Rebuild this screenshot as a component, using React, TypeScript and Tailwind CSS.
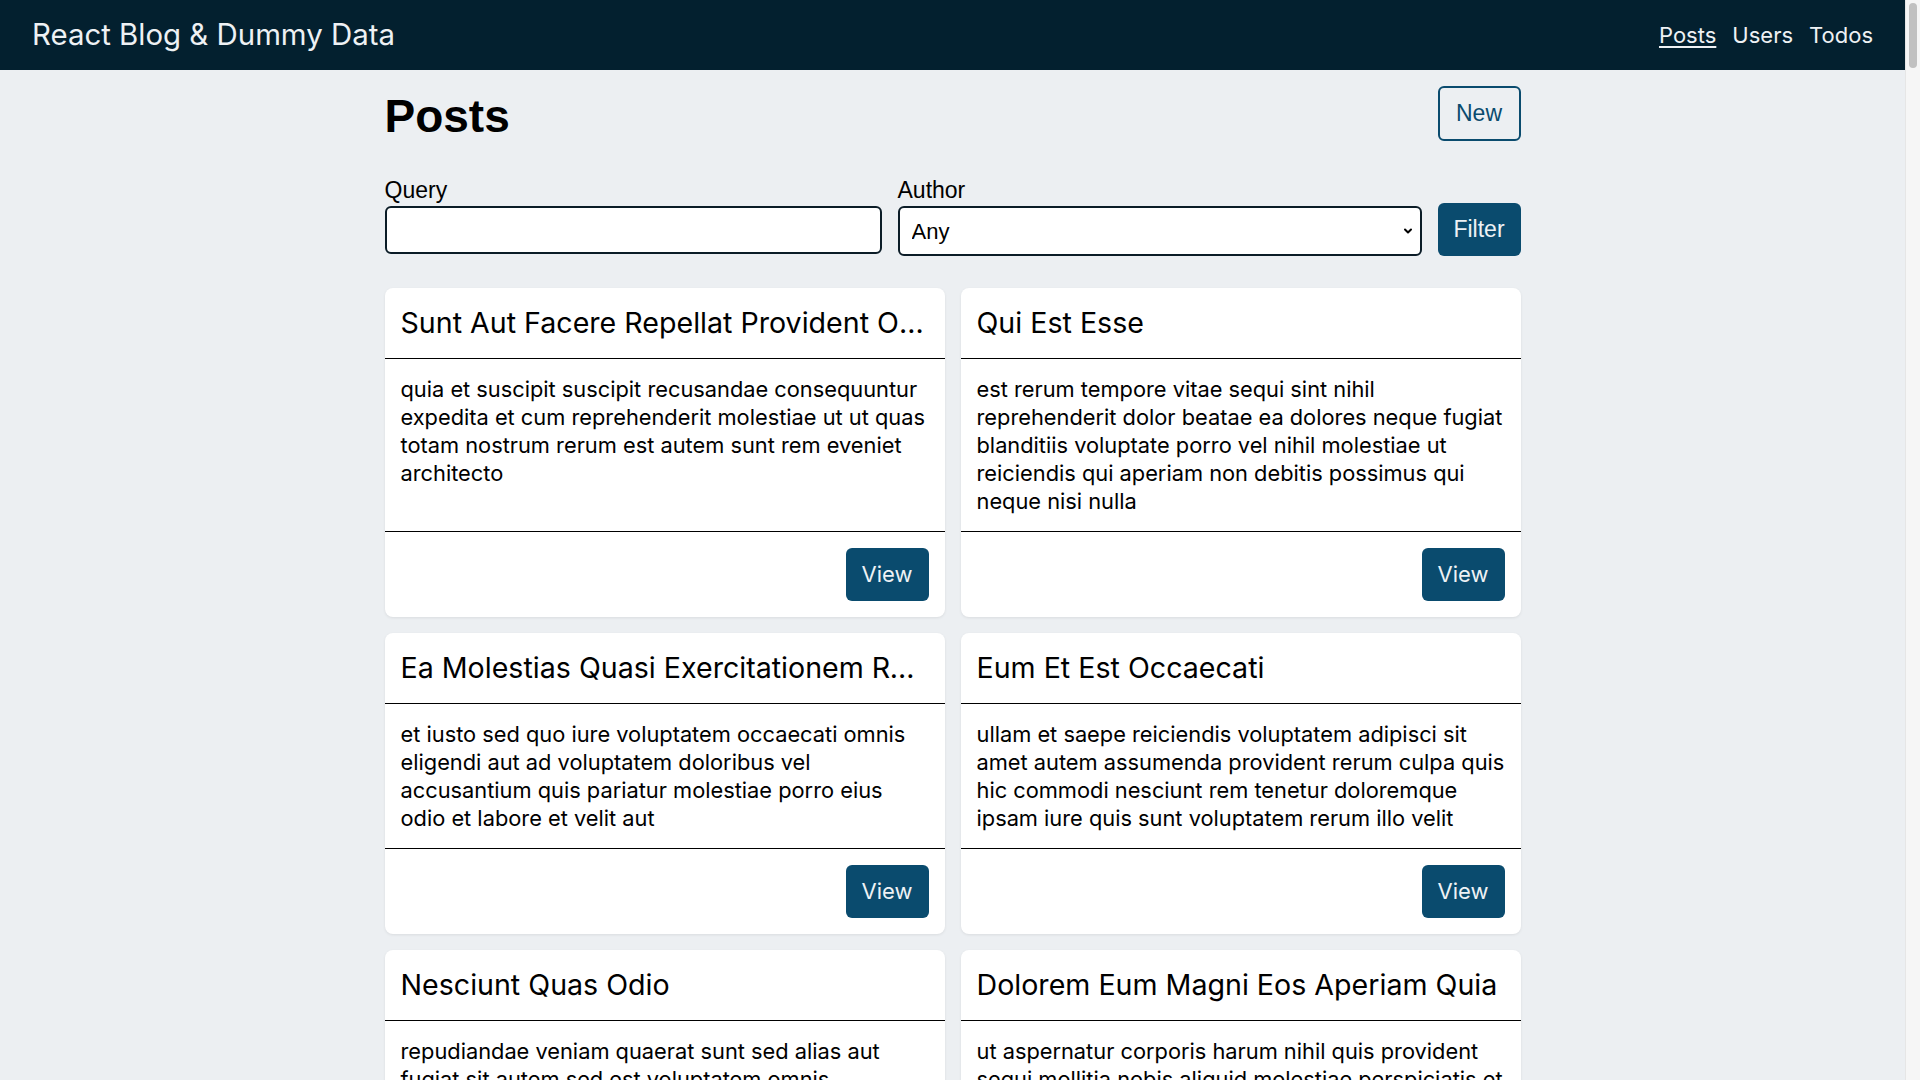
import { ChevronDown } from 'lucide-react';

interface Post {
  id: number;
  title: string;
  body: string;
}

const posts: Post[] = [
  {
    id: 1,
    title: 'sunt aut facere repellat provident occaecati excepturi optio reprehenderit',
    body: 'quia et suscipit suscipit recusandae consequuntur expedita et cum reprehenderit molestiae ut ut quas totam nostrum rerum est autem sunt rem eveniet architecto',
  },
  {
    id: 2,
    title: 'qui est esse',
    body: 'est rerum tempore vitae sequi sint nihil reprehenderit dolor beatae ea dolores neque fugiat blanditiis voluptate porro vel nihil molestiae ut reiciendis qui aperiam non debitis possimus qui neque nisi nulla',
  },
  {
    id: 3,
    title: 'ea molestias quasi exercitationem repellat qui ipsa sit aut',
    body: 'et iusto sed quo iure voluptatem occaecati omnis eligendi aut ad voluptatem doloribus vel accusantium quis pariatur molestiae porro eius odio et labore et velit aut',
  },
  {
    id: 4,
    title: 'eum et est occaecati',
    body: 'ullam et saepe reiciendis voluptatem adipisci sit amet autem assumenda provident rerum culpa quis hic commodi nesciunt rem tenetur doloremque ipsam iure quis sunt voluptatem rerum illo velit',
  },
  {
    id: 5,
    title: 'nesciunt quas odio',
    body: 'repudiandae veniam quaerat sunt sed alias aut fugiat sit autem sed est voluptatem omnis possimus esse voluptatibus quis est aut tenetur dolor neque',
  },
  {
    id: 6,
    title: 'dolorem eum magni eos aperiam quia',
    body: 'ut aspernatur corporis harum nihil quis provident sequi mollitia nobis aliquid molestiae perspiciatis et ea nemo ab reprehenderit accusantium quas voluptate dolores velit et doloremque molestiae',
  },
  {
    id: 7,
    title: 'magnam facilis autem',
    body: 'dolore placeat quibusdam ea quo vitae magni quis enim qui quis quo nemo aut saepe quidem repellat excepturi ut quia sunt ut sequi eos ea sed quas',
  },
  {
    id: 8,
    title: 'dolorem dolore est ipsam',
    body: 'dignissimos aperiam dolorem qui eum facilis quibusdam animi sint suscipit qui sint possimus cum quaerat magni maiores excepturi ipsam ut commodi dolor voluptatum modi aut vitae',
  },
];

function PostCard({ post }: { post: Post }) {
  return (
    <div className="bg-white rounded-lg shadow-[0_1px_3px_rgba(0,0,0,0.08)] flex flex-col min-w-0">
      {/* title */}
      <div className="px-4 py-4 border-b border-black">
        <h2 className="text-[28.6px] leading-[38px] text-black capitalize truncate">{post.title}</h2>
      </div>

      {/* body */}
      <div className="flex-1 p-4">
        <p className="text-[21.8px] leading-[28px] text-black">{post.body}</p>
      </div>

      {/* footer */}
      <div className="border-t border-black p-4 flex justify-end">
        <button className="w-[83px] h-[53px] rounded-md bg-[#0a4b6e] text-[#eef2f5] text-[22px]">
          View
        </button>
      </div>
    </div>
  );
}

export default function App() {
  return (
    <div className="flex min-h-screen bg-[#eceff2] font-['Inter',sans-serif] text-black">
      <div className="flex-1 min-w-0">
        {/* 상단 네비게이션 */}
        <header className="h-[70px] bg-[#03202f] px-8 flex items-center justify-between">
          <a className="text-[29.4px] text-[#eef1f4]">React Blog &amp; Dummy Data</a>
          <nav className="flex items-center gap-4 text-[22px] text-[#eef1f4]">
            <a className="underline underline-offset-[3px]">Posts</a>
            <a>Users</a>
            <a>Todos</a>
          </nav>
        </header>

        <main className="max-w-[1136px] mx-auto pt-4 pb-8">
          {/* 페이지 헤더 */}
          <div className="flex items-center justify-between">
            <h1 className="font-['Liberation_Sans',Arial,sans-serif] font-bold text-[46px] leading-none pt-1">
              Posts
            </h1>
            <button className="w-[83px] h-[55px] rounded-md border-2 border-[#0a4b6e] text-[#0a4b6e] text-[23px] font-['Liberation_Sans',Arial,sans-serif]">
              New
            </button>
          </div>

          {/* 필터 */}
          <form className="mt-9 grid grid-cols-[497px_1fr_83px] gap-x-4 gap-y-[3px] items-start font-['Liberation_Sans',Arial,sans-serif]">
            <span className="text-[23px] leading-[26px]">Query</span>
            <span className="text-[23px] leading-[26px]">Author</span>
            <span />
            <input className="h-12 rounded-md border-2 border-[#0b1c27] bg-white px-3 text-[22px] outline-none" />
            <div className="relative">
              <select className="appearance-none w-full h-[50px] rounded-md border-2 border-[#0b1c27] bg-white pl-3 text-[22px] outline-none">
                <option>Any</option>
              </select>
              <ChevronDown
                className="absolute right-2 top-1/2 -translate-y-1/2 w-3 h-3 pointer-events-none"
                strokeWidth={4}
              />
            </div>
            <button
              type="button"
              className="-mt-[3px] w-[83px] h-[53px] rounded-md bg-[#0a4b6e] text-[#eef2f5] text-[23px]"
            >
              Filter
            </button>
          </form>

          {/* 게시글 목록 */}
          <div className="mt-8 grid grid-cols-2 gap-4">
            {posts.map((post) => (
              <PostCard key={post.id} post={post} />
            ))}
          </div>
        </main>
      </div>

      {/* 스크롤바 */}
      <div className="w-[15px] shrink-0 bg-[#f6f6f6] border-l border-[#e6e6e6] pt-[3px] flex justify-center">
        <div className="w-[8px] h-[65px] rounded-full bg-[#c1c1c1]" />
      </div>
    </div>
  );
}
